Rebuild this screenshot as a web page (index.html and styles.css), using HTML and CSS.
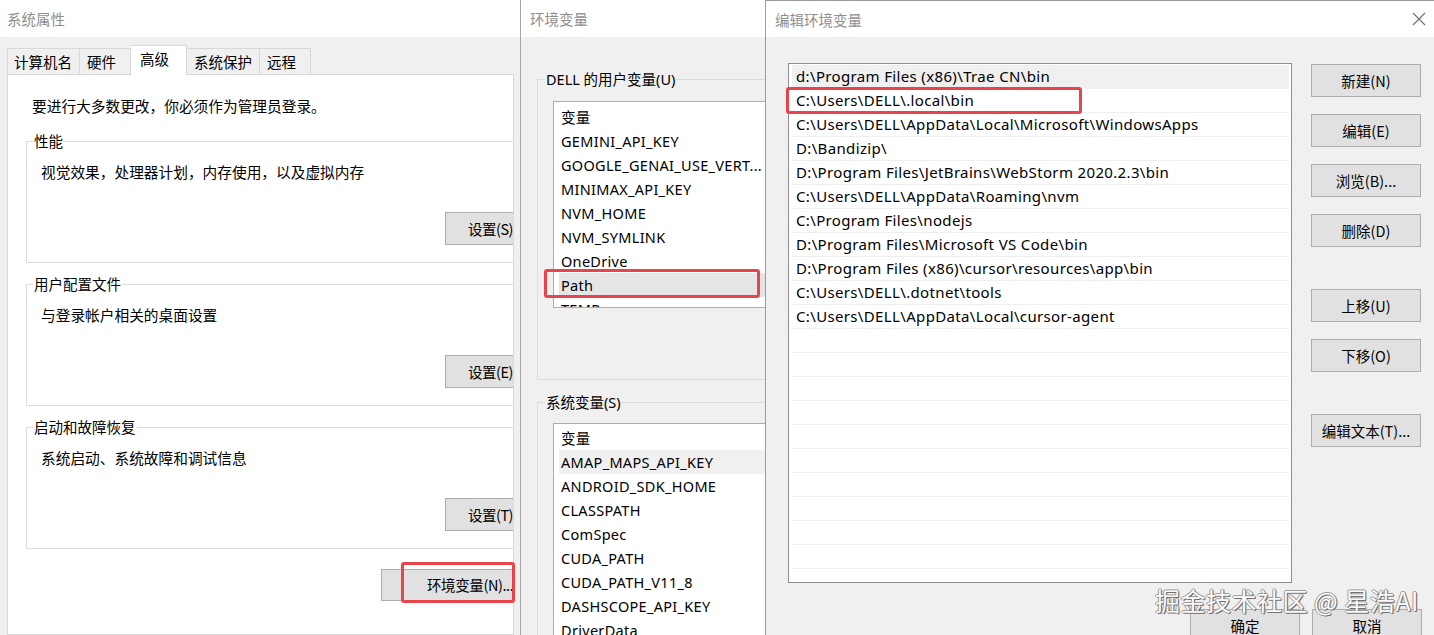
FILE: index.html
```html
<!DOCTYPE html>
<html lang="zh-CN">
<head>
<meta charset="utf-8">
<title>环境变量</title>
<link rel="stylesheet" href="styles.css">
</head>
<body>
<div class="desktop">

  <!-- 系统属性 -->
  <section class="win win-sys">
    <header class="titlebar">系统属性</header>
    <div class="win-body">
      <nav class="tabs">
        <span class="tab">计算机名</span>
        <span class="tab">硬件</span>
        <span class="tab active">高级</span>
        <span class="tab">系统保护</span>
        <span class="tab">远程</span>
      </nav>
      <div class="panel">
        <p class="note">要进行大多数更改，你必须作为管理员登录。</p>
        <fieldset class="group">
          <legend>性能</legend>
          <p class="group-text">视觉效果，处理器计划，内存使用，以及虚拟内存</p>
          <button class="btn btn-clip">设置(S)...</button>
        </fieldset>
        <fieldset class="group">
          <legend>用户配置文件</legend>
          <p class="group-text">与登录帐户相关的桌面设置</p>
          <button class="btn btn-clip">设置(E)...</button>
        </fieldset>
        <fieldset class="group">
          <legend>启动和故障恢复</legend>
          <p class="group-text">系统启动、系统故障和调试信息</p>
          <button class="btn btn-clip">设置(T)...</button>
        </fieldset>
        <button class="btn btn-env">环境变量(N)...</button>
      </div>
    </div>
  </section>

  <!-- 环境变量 -->
  <section class="win win-env">
    <header class="titlebar">环境变量</header>
    <div class="win-body env-body">
      <fieldset class="env-group env-user">
        <legend>DELL 的用户变量(U)</legend>
        <div class="listbox list-user">
          <div class="row">变量</div>
          <div class="row">GEMINI_API_KEY</div>
          <div class="row">GOOGLE_GENAI_USE_VERT...</div>
          <div class="row">MINIMAX_API_KEY</div>
          <div class="row">NVM_HOME</div>
          <div class="row">NVM_SYMLINK</div>
          <div class="row">OneDrive</div>
          <div class="row sel">Path</div>
          <div class="row">TEMP</div>
        </div>
      </fieldset>
      <fieldset class="env-group env-sys">
        <legend>系统变量(S)</legend>
        <div class="listbox list-sys">
          <div class="row">变量</div>
          <div class="row hover">AMAP_MAPS_API_KEY</div>
          <div class="row">ANDROID_SDK_HOME</div>
          <div class="row">CLASSPATH</div>
          <div class="row">ComSpec</div>
          <div class="row">CUDA_PATH</div>
          <div class="row">CUDA_PATH_V11_8</div>
          <div class="row">DASHSCOPE_API_KEY</div>
          <div class="row">DriverData</div>
        </div>
      </fieldset>
    </div>
  </section>

  <!-- 编辑环境变量 -->
  <section class="win win-edit">
    <header class="titlebar titlebar-edit">
      <span>编辑环境变量</span>
      <svg class="close" width="14" height="14" viewBox="0 0 14 14" aria-hidden="true">
        <path d="M1 1 L13 13 M13 1 L1 13" stroke="#6f6f6f" stroke-width="1.1" fill="none"/>
      </svg>
    </header>
    <div class="win-body edit-body">
      <div class="edit-main">
        <div class="pathlist">
          <div class="prow hover">d:\Program Files (x86)\Trae CN\bin</div>
          <div class="prow">C:\Users\DELL\.local\bin</div>
          <div class="prow">C:\Users\DELL\AppData\Local\Microsoft\WindowsApps</div>
          <div class="prow">D:\Bandizip\</div>
          <div class="prow">D:\Program Files\JetBrains\WebStorm 2020.2.3\bin</div>
          <div class="prow">C:\Users\DELL\AppData\Roaming\nvm</div>
          <div class="prow">C:\Program Files\nodejs</div>
          <div class="prow">D:\Program Files\Microsoft VS Code\bin</div>
          <div class="prow">D:\Program Files (x86)\cursor\resources\app\bin</div>
          <div class="prow">C:\Users\DELL\.dotnet\tools</div>
          <div class="prow">C:\Users\DELL\AppData\Local\cursor-agent</div>
          <div class="prow"></div>
          <div class="prow"></div>
          <div class="prow"></div>
          <div class="prow"></div>
          <div class="prow"></div>
          <div class="prow"></div>
          <div class="prow"></div>
          <div class="prow"></div>
          <div class="prow"></div>
          <div class="prow"></div>
          <div class="prow"></div>
        </div>
        <div class="side-buttons">
          <button class="btn btn-side">新建(N)</button>
          <button class="btn btn-side">编辑(E)</button>
          <button class="btn btn-side">浏览(B)...</button>
          <button class="btn btn-side">删除(D)</button>
          <button class="btn btn-side gap-big">上移(U)</button>
          <button class="btn btn-side">下移(O)</button>
          <button class="btn btn-side gap-big">编辑文本(T)...</button>
        </div>
      </div>
      <div class="edit-footer">
        <button class="btn btn-side">确定</button>
        <button class="btn btn-side">取消</button>
      </div>
    </div>
  </section>

  <!-- annotations -->
  <div class="mark mark-env"></div>
  <div class="mark mark-path"></div>
  <div class="mark mark-local"></div>
  <div class="watermark">掘金技术社区 @ 星浩AI</div>
</div>
</body>
</html>
```

FILE: styles.css
```css
* { box-sizing: border-box; }
html, body { margin: 0; padding: 0; }
body {
  width: 1434px;
  height: 635px;
  overflow: hidden;
  background: #f0f0f0;
  font-family: "Noto Sans", "Noto Sans CJK SC", sans-serif;
  font-size: 14.5px;
  color: #000;
}
.desktop { position: relative; width: 1434px; height: 635px; overflow: hidden; }

.win {
  position: absolute;
  top: 0;
  height: 635px;
  background: #f0f0f0;
  overflow: hidden;
  display: flex;
  flex-direction: column;
}
.titlebar {
  height: 37px;
  flex: none;
  background: #fff;
  line-height: 37px;
  font-size: 14.5px;
  color: #8f8f8f;
  font-family: "Noto Sans CJK SC", sans-serif;
}
.win-body { flex: 1; min-height: 0; }

.btn {
  font-family: "Noto Sans CJK SC", sans-serif;
  font-size: 14.5px;
  background: #e1e1e1;
  border: 1px solid #adadad;
  color: #000;
  padding: 0;
  line-height: 20px;
  white-space: nowrap;
}

/* ---------- 系统属性 ---------- */
.win-sys { left: 0; width: 520px; }
.win-sys .titlebar { padding-left: 7px; }
.tabs {
  display: flex;
  align-items: flex-end;
  height: 37px;
  padding: 8px 0 0 7px;
}
.tab {
  height: 26px;
  min-width: 51px;
  padding: 0 7px;
  border: 1px solid #d9d9d9;
  border-left: none;
  border-bottom: none;
  background: #f0f0f0;
  line-height: 25px;
  font-family: "Noto Sans CJK SC", sans-serif;
}
.tab:first-child { border-left: 1px solid #d9d9d9; padding-left: 6px; }
.tab.active {
  height: 30px;
  min-width: 56px;
  padding-left: 9px;
  background: #fff;
  margin-bottom: -1px;
  position: relative;
  line-height: 26px;
}
.panel {
  margin-left: 7px;
  width: 507px;
  height: 561px;
  background: #fff;
  border: 1px solid #d9d9d9;
  overflow: hidden;
  padding: 21px 0 0 18px;
}
.note {
  margin: 0 0 15px 6px;
  line-height: 20px;
  font-size: 14.7px;
  font-family: "Noto Sans CJK SC", sans-serif;
}
.group {
  margin: 0 0 11px 0;
  padding: 0;
  width: 520px;
  height: 132px;
  border: 1px solid #dcdcdc;
  display: flex;
  flex-direction: column;
  align-items: flex-start;
}
.group legend {
  margin-left: 6px;
  padding: 0 1px;
  line-height: 20px;
  font-family: "Noto Sans CJK SC", sans-serif;
}
.group-text {
  margin: 11px 0 0 14px;
  line-height: 20px;
  font-size: 14.7px;
  font-family: "Noto Sans CJK SC", sans-serif;
}
.btn-clip {
  margin: 30px 0 0 418px;
  width: 110px;
  height: 33px;
  text-align: left;
  padding-left: 22px;
  letter-spacing: -0.5px;
}
.btn-env {
  margin: 9px 0 0 355px;
  width: 180px;
  height: 32px;
  text-align: left;
  padding-left: 45px;
  letter-spacing: -0.4px;
}

/* ---------- 环境变量 ---------- */
.win-env {
  left: 520px;
  width: 700px;
  border-left: 1px solid #a6a6a6;
}
.win-env .titlebar { padding-left: 9px; }
.env-body { padding: 32px 0 0 16px; }
.env-group {
  margin: 0;
  padding: 0 0 0 15px;
  border: 1px solid #dcdcdc;
  width: 600px;
}
.env-group legend {
  margin-left: -8px;
  padding: 0 1px;
  line-height: 20px;
}
.env-user { height: 311px; margin-bottom: 12px; }
.env-user .listbox { margin-top: 12px; height: 207px; }
.env-sys { height: 400px; }
.env-sys .listbox { margin-top: 11px; height: 300px; }
.listbox {
  background: #fff;
  border: 1px solid #adadad;
  overflow: hidden;
  padding: 3px 0 0 5px;
}
.list-sys { padding-top: 2px; }
.row {
  height: 24px;
  line-height: 24px;
  padding-left: 2px;
  letter-spacing: 0.3px;
  white-space: nowrap;
}
.row.sel { background: #e5e5e5; }
.row.hover { background: #f0f0f0; }

/* ---------- 编辑环境变量 ---------- */
.win-edit {
  left: 765px;
  width: 669px;
  border-left: 1px solid #9c9c9c;
  border-top: 1px solid #9c9c9c;
}
.titlebar-edit {
  height: 36px;
  padding: 0 8px 0 9px;
  display: flex;
  align-items: center;
  justify-content: space-between;
  line-height: normal;
}
.close { flex: none; margin-top: 0; }
.edit-body { padding: 26px 0 0 22px; display: flex; flex-direction: column; }
.edit-main { display: flex; gap: 19px; }
.pathlist {
  width: 504px;
  height: 520px;
  background: #fff;
  border: 1px solid #8f8f8f;
  overflow: hidden;
  padding: 1px 2px 0 3px;
}
.prow {
  height: 24px;
  line-height: 23px;
  border-bottom: 1px solid #eeeeee;
  padding-left: 4px;
  font-size: 15px;
  letter-spacing: 0.35px;
  white-space: nowrap;
}
.prow.hover { background: #f0f0f0; }
.side-buttons {
  display: flex;
  flex-direction: column;
  gap: 17px;
  padding-top: 1px;
}
.btn-side {
  width: 110px;
  height: 33px;
  text-align: center;
}
.side-buttons .gap-big { margin-top: 25px; }
.edit-footer {
  display: flex;
  justify-content: flex-end;
  gap: 12px;
  padding-right: 12px;
  margin-top: 26px;
}

/* ---------- annotations ---------- */
.mark {
  position: absolute;
  border: 3px solid #e8454a;
  border-radius: 3px;
  pointer-events: none;
}
.mark-env { left: 401px; top: 562px; width: 114px; height: 41px; }
.mark-path { left: 544px; top: 269px; width: 216px; height: 29px; }
.mark-local { left: 786px; top: 87px; width: 296px; height: 27px; }

.watermark {
  position: absolute;
  left: 1155px;
  top: 584px;
  font-family: "Noto Sans CJK SC", sans-serif;
  font-size: 25px;
  letter-spacing: 0.5px;
  line-height: 32px;
  color: #fafafa;
  text-shadow: 1px 1px 0 #707070, -1px 0 0 #9a9a9a, 0 -1px 0 #9a9a9a, 1px 0 1px #808080;
  white-space: nowrap;
}
```
